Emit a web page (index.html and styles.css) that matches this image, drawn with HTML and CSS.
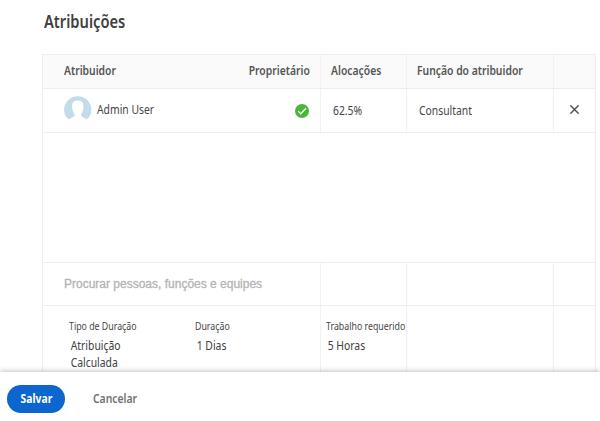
FILE: index.html
```html
<!DOCTYPE html>
<html lang="pt">
<head>
<meta charset="utf-8">
<title>Atribuições</title>
<link rel="stylesheet" href="styles.css">
</head>
<body>
<main class="content">
  <h1 class="title"><span class="narrow">Atribuições</span></h1>
  <section class="table">
    <div class="row head">
      <div class="cell first"><span class="narrow">Atribuidor</span><span class="narrow owner">Proprietário</span></div>
      <div class="cell"><span class="narrow">Alocações</span></div>
      <div class="cell"><span class="narrow">Função do atribuidor</span></div>
      <div class="cell"></div>
    </div>
    <div class="row user">
      <div class="cell first">
        <span class="person">
          <svg class="avatar" viewBox="0 0 28 28"><defs><clipPath id="round"><circle cx="13.700" cy="13.800" r="13.600"/></clipPath></defs><g clip-path="url(#round)"><path fill="#c3dbea" d="M0 0H28V19L22.500 23.500C21 21.500 17.300 21.500 17.100 19.300C17 17.500 19.400 15.500 19.400 11.500V9.500C19.400 6 17.500 4.400 13.900 4.400S8.200 6 8.200 9.500V11.500C8.200 15.500 10.700 17.500 10.600 19.300C10.400 21.500 6.500 21.500 5 23.500L0 19Z"/></g></svg>
          <span class="narrow name">Admin User</span>
        </span>
        <svg class="check" viewBox="0 0 14 14"><circle cx="7" cy="7" r="7" fill="#4bb53c"/><path d="M3.100 7.100L5.800 9.800L10.900 4.200" fill="none" stroke="#fff" stroke-width="1.300"/></svg>
      </div>
      <div class="cell value"><span class="narrow">62.5%</span></div>
      <div class="cell value"><span class="narrow">Consultant</span></div>
      <div class="cell remove"><svg class="close" viewBox="0 0 8 8"><path d="M.3.3L7.700 7.700M7.700.3L.3 7.700" stroke="#505256" stroke-width="1.300"/></svg></div>
    </div>
    <div class="blank"></div>
    <div class="row search">
      <div class="cell first"><span class="placeholder">Procurar pessoas, funções e equipes</span></div>
      <div class="cell"></div><div class="cell"></div><div class="cell"></div>
    </div>
    <div class="row details">
      <div class="cell first">
        <div class="field kind"><span class="narrow label">Tipo de Duração</span><span class="narrow data">Atribuição<br>Calculada</span></div>
        <div class="field"><span class="narrow label">Duração</span><span class="narrow data">1 Dias</span></div>
      </div>
      <div class="cell"><div class="field"><span class="narrow label">Trabalho requerido</span><span class="narrow data">5 Horas</span></div></div>
      <div class="cell"></div><div class="cell"></div>
    </div>
  </section>
</main>
<footer class="actions">
  <button class="save"><span class="narrow">Salvar</span></button>
  <button class="cancel"><span class="narrow">Cancelar</span></button>
</footer>
</body>
</html>
```

FILE: styles.css
```css
* { box-sizing: border-box; }
body {
  margin: 0;
  height: 421px;
  display: flex;
  flex-direction: column;
  overflow: hidden;
  background: #fff;
  color: #464646;
  font: 12px/16px "Noto Sans", "Open Sans", sans-serif;
  white-space: nowrap;
}
/* Condensed text: the installed family has no narrow width */
.narrow { display: inline-block; transform: scaleX(.863); transform-origin: left center; }
.content { height: 372px; padding-left: 42px; }
.title {
  margin: 0;
  height: 54px;
  padding: 11px 0 0 2px;
  font-size: 17px;
  line-height: 22px;
  font-weight: 600;
  color: #404040;
}
.table { width: 554px; border: 1px solid #eee; border-bottom: 0; }
.row { display: grid; grid-template-columns: 277px 86px 147px 42px; border-bottom: 1px solid #eee; }
.cell { display: flex; align-items: center; min-width: 0; padding-left: 10px; border-left: 1px solid #f1f1f1; }
.cell.first { justify-content: space-between; padding: 0 10px 0 21px; border-left: 0; }
.head { height: 34px; background: #fafafa; font-weight: 600; color: #545454; }
.head .cell { padding-bottom: 1px; }
.owner { transform-origin: right center; }
.user { height: 44px; }
.person { display: flex; align-items: center; gap: 5px; }
.avatar { width: 28px; height: 28px; margin-top: -2px; }
.name { margin-top: -2px; }
.check { width: 14px; height: 14px; margin-right: 1px; }
.value { padding-left: 12px; }
.remove { padding: 0 0 2px 16px; }
.close { width: 9px; height: 9px; }
.blank { height: 130px; border-bottom: 1px solid #eee; }
.search { height: 43px; }
.placeholder { font: 12px/16px "Liberation Sans", sans-serif; color: #b4b4b4; -webkit-text-stroke: .3px #b4b4b4; }
.details { height: 67px; border-bottom: 0; }
.details .cell { align-items: flex-start; padding-left: 5px; }
.details .cell.first { justify-content: flex-start; padding-left: 26px; }
.field { padding-top: 12px; }
.kind { width: 126px; }
.label, .data { display: block; }
.label { font-size: 10.2px; line-height: 16px; }
.data { padding: 3px 0 0 2px; line-height: 17px; color: #404040; }
.actions {
  position: relative;
  height: 49px;
  display: flex;
  align-items: flex-start;
  padding: 13px 0 0 7px;
  gap: 28px;
  background: #fff;
  box-shadow: 0 -1px 5px rgba(100, 120, 135, .45);
}
button { border: 0; padding: 0; height: 28px; font: 600 12px/16px "Noto Sans", sans-serif; }
button .narrow { transform-origin: center; }
.save { width: 58px; border-radius: 14px; background: #0d66d0; color: #fff; font-weight: 700; }
.cancel { width: 44px; display: flex; align-items: center; background: none; color: #707070; }
.cancel .narrow { transform-origin: left center; }
```
